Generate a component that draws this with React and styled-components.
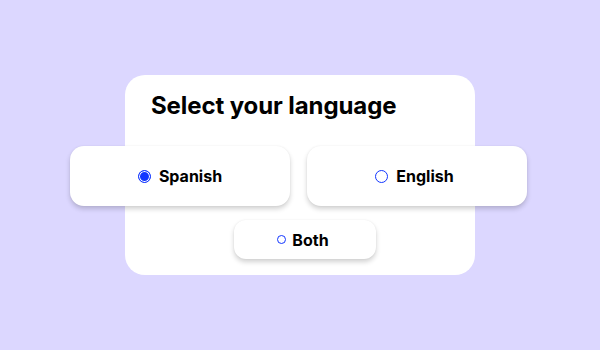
import React, { useState } from 'react';
import styled, { createGlobalStyle } from 'styled-components';

const GlobalStyle = createGlobalStyle`
  html, body {
    margin: 0;
    padding: 0;
    background: #dcd7ff;
  }
  body {
    font-family: Inter, "Noto Sans", sans-serif;
  }
`;

const Page = styled.div`
  width: 600px;
  height: 350px;
  display: flex;
  justify-content: center;
  padding-top: 75px;
  box-sizing: border-box;
`;

const Card = styled.div`
  width: 350px;
  height: 200px;
  background: #fff;
  border-radius: 20px;
  display: flex;
  flex-direction: column;
  align-items: flex-start;
  box-sizing: border-box;
`;

const Title = styled.h1`
  margin: 0;
  padding: 16px 0 0 26px;
  font-size: 24px;
  line-height: 29px;
  font-weight: 700;
  color: #000;
  letter-spacing: -0.1px;
`;

const Row = styled.div`
  display: flex;
  gap: 17px;
  margin-top: ${(p) => p.$top}px;
  margin-left: ${(p) => p.$left}px;
`;

const Option = styled.button`
  display: flex;
  align-items: center;
  justify-content: center;
  gap: ${(p) => (p.$small ? '6px' : '8px')};
  width: ${(p) => p.$width}px;
  height: ${(p) => p.$height}px;
  padding: 0 ${(p) => p.$shift || 0}px 0 0;
  border: none;
  border-radius: ${(p) => (p.$small ? '12px' : '14px')};
  background: #fff;
  box-shadow: 0 3px 5px rgba(0, 0, 0, 0.18), 0 0 2px rgba(0, 0, 0, 0.06);
  font-family: Inter, "Noto Sans", sans-serif;
  font-size: 16px;
  font-weight: 700;
  color: #000;
  cursor: pointer;
`;

const Radio = styled.span`
  box-sizing: border-box;
  width: ${(p) => p.$size}px;
  height: ${(p) => p.$size}px;
  border-radius: 50%;
  border: 1px solid #1236ff;
  background: ${(p) => (p.$checked ? '#1236ff' : '#fff')};
  box-shadow: ${(p) => (p.$checked ? 'inset 0 0 0 1px #fff' : 'none')};
  flex-shrink: 0;
`;

const options = [
  { id: 'es', label: 'Spanish', shift: 0 },
  { id: 'en', label: 'English', shift: 5 },
];

export default function App() {
  const [lang, setLang] = useState('es');
  return (
    <>
      <GlobalStyle />
      <Page>
        <Card>
          <Title>Select your language</Title>
          <Row $top={26} $left={-55}>
            {options.map((o) => (
              <Option
                key={o.id}
                $width={220}
                $height={60}
                $shift={o.shift}
                onClick={() => setLang(o.id)}
              >
                <Radio $size={13} $checked={lang === o.id} />
                {o.label}
              </Option>
            ))}
          </Row>
          <Row $top={14} $left={109}>
            <Option $small $width={142} $height={39} $shift={4} onClick={() => setLang('both')}>
              <Radio $size={9} $checked={lang === 'both'} />
              Both
            </Option>
          </Row>
        </Card>
      </Page>
    </>
  );
}
